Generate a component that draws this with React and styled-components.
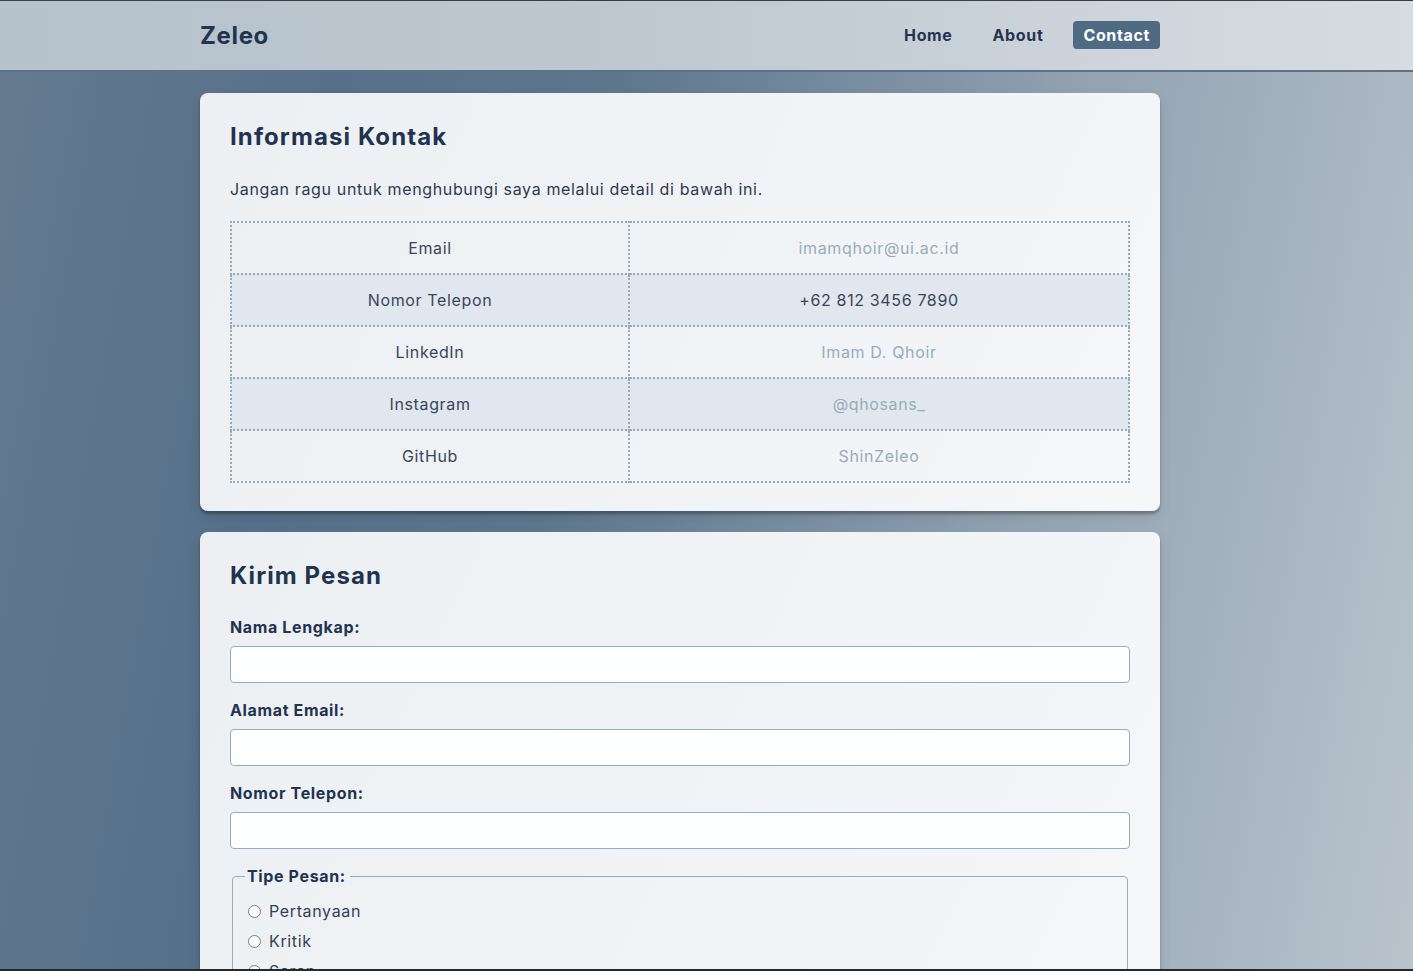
import React from 'react'
import styled, { createGlobalStyle } from 'styled-components';

const GlobalStyle = createGlobalStyle`
  html, body {
    margin: 0;
    padding: 0;
  }
  body {
    font-family: Inter, "Open Sans", sans-serif;
    letter-spacing: 0.04em;
    color: #2f3a4b;
    min-height: 100vh;
    background: linear-gradient(100deg, #647b8f 0%, #56708a 22%, #5d778d 40%, #93a3b2 70%, #b9c4cd 100%);
    background-attachment: fixed;
  }
  body::before {
    content: '';
    position: fixed;
    inset: 0;
    border-top: 1px solid #3a3f44;
    border-bottom: 2px solid #26292c;
    pointer-events: none;
    z-index: 10;
  }
`;

const contacts = [
  { label: 'Email', value: 'imamqhoir@ui.ac.id', link: true },
  { label: 'Nomor Telepon', value: '+62 812 3456 7890', link: false },
  { label: 'LinkedIn', value: 'Imam D. Qhoir', link: true },
  { label: 'Instagram', value: '@qhosans_', link: true },
  { label: 'GitHub', value: 'ShinZeleo', link: true },
];

const App = () => {
  return (
    <>
      <GlobalStyle />
      <Header>
        <Inner>
          <Logo>Zeleo</Logo>
          <Nav>
            <NavLink href="#">Home</NavLink>
            <NavLink href="#">About</NavLink>
            <NavLink href="#" active>Contact</NavLink>
          </Nav>
        </Inner>
      </Header>

      <Main>
        <Card>
          <Title>Informasi Kontak</Title>
          <Intro>Jangan ragu untuk menghubungi saya melalui detail di bawah ini.</Intro>
          <Table>
            <tbody>
              {contacts.map((c, i) => (
                <Row key={c.label} even={i % 2 === 1}>
                  <Cell first>{c.label}</Cell>
                  <Cell>
                    {c.link ? <ValueLink href="#">{c.value}</ValueLink> : c.value}
                  </Cell>
                </Row>
              ))}
            </tbody>
          </Table>
        </Card>

        <Card>
          <Title>Kirim Pesan</Title>
          <Form>
            <Label>Nama Lengkap:</Label>
            <Input type="text" />
            <Label>Alamat Email:</Label>
            <Input type="email" />
            <Label>Nomor Telepon:</Label>
            <Input type="tel" />
            <Fieldset>
              <Legend>Tipe Pesan:</Legend>
              <RadioRow><Radio type="radio" name="tipe" />Pertanyaan</RadioRow>
              <RadioRow><Radio type="radio" name="tipe" />Kritik</RadioRow>
              <RadioRow><Radio type="radio" name="tipe" />Saran</RadioRow>
            </Fieldset>
          </Form>
        </Card>
      </Main>
    </>
  )
};

// the page column sits a little left of centre (room kept on the right)
const Header = styled.header`
  height: 70px;
  padding-right: 53px;
  background: linear-gradient(90deg, #b6c2cc 0%, #bdc8d0 45%, #ccd3da 75%, #d6dce2 100%);
  border-bottom: 2px solid #5b7389;
`;

const Inner = styled.div`
  max-width: 960px;
  height: 100%;
  margin: 0 auto;
  display: flex;
  align-items: center;
  justify-content: space-between;
`;

const Logo = styled.div`
  font-size: 24px;
  font-weight: 700;
  color: #243450;
`;

const Nav = styled.nav`
  display: flex;
  align-items: center;
  gap: 20px;
`;

const NavLink = styled.a`
  font-size: 16px;
  font-weight: 700;
  text-decoration: none;
  color: ${({ active }) => (active ? '#ffffff' : '#243450')};
  background: ${({ active }) => (active ? '#4f6b84' : 'transparent')};
  padding: 4px 10px;
  border-radius: 4px;
  line-height: 20px;
`;

const Main = styled.main`
  padding-right: 53px;
  & > * {
    max-width: 900px;
  }
  display: flex;
  flex-direction: column;
  align-items: center;
  gap: 21px;
  margin-top: 21px;
`;

const Card = styled.section`
  width: 100%;
  background: linear-gradient(115deg, #edf0f3 0%, #f0f3f6 50%, #f5f7f9 100%);
  border-radius: 8px;
  padding: 30px 30px 28px;
  box-shadow: 0 3px 3px rgba(0, 0, 0, 0.28), 0 6px 14px rgba(0, 0, 0, 0.08);
`;

const Title = styled.h2`
  margin: 0 0 27px;
  font-size: 24px;
  line-height: 27px;
  font-weight: 700;
  letter-spacing: 0.046em;
  color: #223350;
`;

const Intro = styled.p`
  margin: 0 0 20px;
  font-size: 16px;
  line-height: 24px;
  color: #2f3a4b;
`;

const Table = styled.table`
  width: 100%;
  border-collapse: collapse;
  border: 2px dotted #98aab8;
  font-size: 16px;
`;

const Row = styled.tr`
  background: ${({ even }) => (even ? '#e1e7ee' : 'transparent')};
`;

const Cell = styled.td`
  width: ${({ first }) => (first ? '376px' : 'auto')};
  border: 2px dotted #98aab8;
  text-align: center;
  height: 50px;
  padding: 0 10px;
  color: #3a4658;
`;

const ValueLink = styled.a`
  color: #9aabb9;
  text-decoration: none;
`;

const Form = styled.form`
  display: flex;
  flex-direction: column;
  padding-top: 1px;
`;

const Label = styled.label`
  display: block;
  margin: 0 0 9px;
  font-size: 16px;
  line-height: 20px;
  font-weight: 700;
  color: #223350;
  &:not(:first-child) {
    margin-top: 17px;
  }
`;

const Input = styled.input`
  box-sizing: border-box;
  width: 100%;
  height: 37px;
  padding: 8px;
  font: inherit;
  border: 1px solid #97acbd;
  border-radius: 4px;
  background: #fdfefe;
`;

const Fieldset = styled.fieldset`
  margin: 17px 2px 0;
  padding: 10px 12px 10px;
  border: 1px solid #9aacbb;
  border-radius: 4px;
`;

const Legend = styled.legend`
  padding: 0 4px 0 2px;
  font-size: 16px;
  font-weight: 700;
  color: #223350;
`;

const RadioRow = styled.label`
  display: flex;
  align-items: center;
  height: 30px;
  font-size: 16px;
  color: #354153;
`;

const Radio = styled.input`
  margin: 0 8px 0 3px;
  width: 13px;
  height: 13px;
`;

export default App;
